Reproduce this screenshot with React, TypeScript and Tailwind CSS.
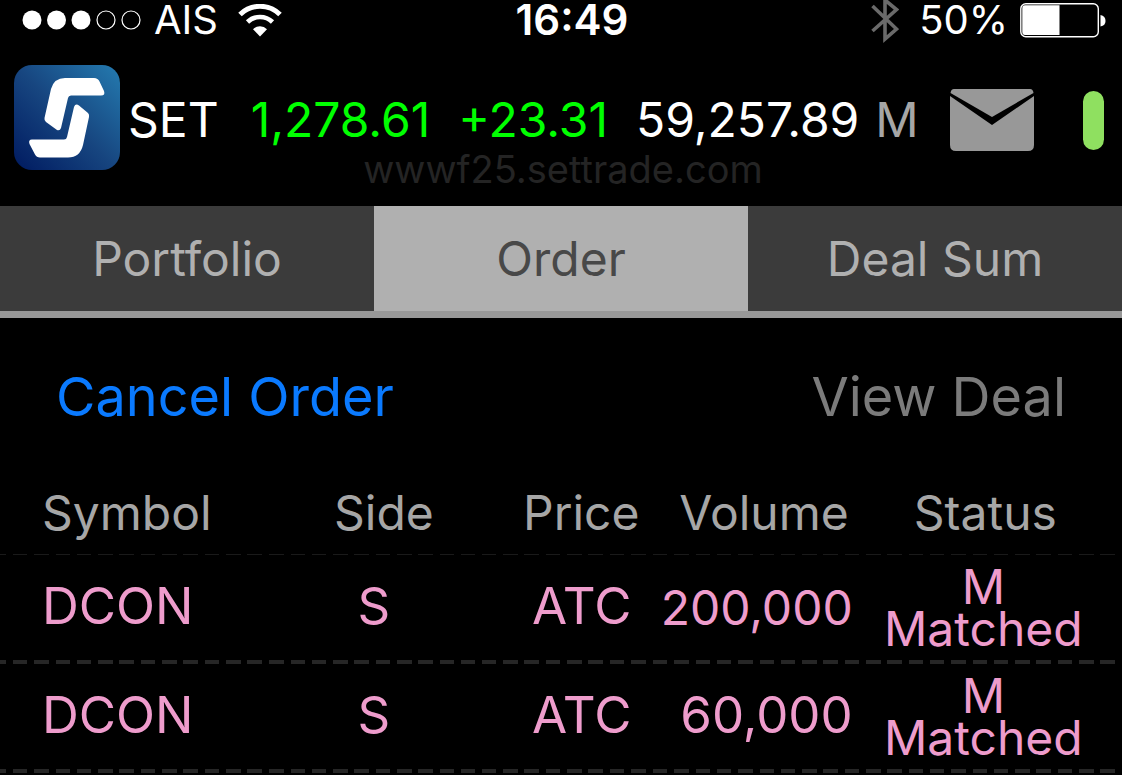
import { clsx } from 'clsx';

interface Order {
  id: number;
  symbol: string;
  side: string;
  price: string;
  volume: string;
  status: string[];
}

const orders: Order[] = [
  { id: 1, symbol: 'DCON', side: 'S', price: 'ATC', volume: '200,000', status: ['M', 'Matched'] },
  { id: 2, symbol: 'DCON', side: 'S', price: 'ATC', volume: '60,000', status: ['M', 'Matched'] },
];

const tabs = ['Portfolio', 'Order', 'Deal Sum'];

function SignalDots() {
  return (
    <svg width="120" height="20" viewBox="0 0 120 20" aria-hidden="true">
      <circle cx="10" cy="10" r="9.5" fill="#fff" />
      <circle cx="34.5" cy="10" r="9.5" fill="#fff" />
      <circle cx="59" cy="10" r="9.5" fill="#fff" />
      <circle cx="84" cy="10" r="9" fill="none" stroke="#fff" strokeWidth="1.2" />
      <circle cx="109" cy="10" r="9" fill="none" stroke="#fff" strokeWidth="1.2" />
    </svg>
  );
}

function Wifi() {
  return (
    <svg width="44" height="33" viewBox="0 0 44 33" fill="none" stroke="#fff" aria-hidden="true">
      <path d="M2 10.5A28.5 28.5 0 0 1 42 10.5" strokeWidth="5" />
      <path d="M9.5 18A18 18 0 0 1 34.5 18" strokeWidth="4.6" />
      <path d="M22 32.5L15 25.2A10 10 0 0 1 29 25.2Z" fill="#fff" stroke="none" />
    </svg>
  );
}

function Bluetooth() {
  return (
    <svg width="28" height="46" viewBox="0 0 28 46" fill="none" stroke="#6a6a6a" strokeWidth="3.6" aria-hidden="true">
      <path d="M1.5 9L25.5 32L14 42V3L25.5 12.5L1.5 34" />
    </svg>
  );
}

function Battery() {
  return (
    <svg width="86" height="35" viewBox="0 0 86 35" aria-hidden="true">
      <rect x="0.8" y="0.8" width="77.5" height="33" rx="5" fill="none" stroke="#fff" strokeWidth="1.4" />
      <path d="M5 2.3H39.5V32H5Q2.3 32 2.3 29V5.5Q2.3 2.3 5 2.3Z" fill="#fff" />
      <path d="M80.5 12Q85.5 13 85.5 18Q85.5 22.5 80.5 23.5Z" fill="#fff" />
    </svg>
  );
}

function Logo() {
  return (
    <svg className="shrink-0" width="106" height="105" viewBox="0 0 106 105" role="img" aria-label="Settrade">
      <defs>
        <linearGradient id="logo-bg" x1="0" y1="1" x2="1" y2="0">
          <stop offset="0" stopColor="#001a60" />
          <stop offset="0.5" stopColor="#174680" />
          <stop offset="1" stopColor="#247bb0" />
        </linearGradient>
      </defs>
      <rect width="106" height="105" rx="18" fill="url(#logo-bg)" />
      <g fill="#fff">
        <path d="M51 13H80Q84 13 85.5 16.5L90 26Q91.5 30.5 87 30.5H57Q54.500 30.5 54 33L47 63Q46 66 43 65L32 57Q30 55.5 30.500 53L37 24Q40 13 51 13Z" />
        <path d="M65 40.5L74 48Q75.5 49.500 75 52L69 80Q66 92.5 54 92.5H26Q22.5 92.5 21 89.500L15.500 79Q14 74.500 18 74.500H50Q52.500 74.500 53 72L60 42Q61.500 38 65 40.500Z" />
      </g>
    </svg>
  );
}

function Envelope() {
  return (
    <svg width="86" height="64" viewBox="0 0 86 64" fill="#989898" aria-hidden="true">
      <path d="M5 1H81Q84 1 84.5 5L43 29L1.5 5Q2 1 5 1Z" />
      <path d="M1 8L43 37L85 8V57Q85 63 79 63H7Q1 63 1 57Z" />
    </svg>
  );
}

export default function App() {
  return (
    <div className="min-h-screen bg-black font-[Inter,sans-serif] text-white">
      <div className="grid h-10 grid-cols-3 grid-rows-1 items-center pr-4 pl-[22px] text-[40px] leading-10">
        <div className="flex items-center gap-3">
          <SignalDots />
          <span>AIS</span>
          <span className="pl-2"><Wifi /></span>
        </div>
        <div className="pl-4 text-center text-[42px] font-semibold">16:49</div>
        <div className="flex items-center justify-end gap-3">
          <Bluetooth />
          <span className="pl-2">50%</span>
          <Battery />
        </div>
      </div>

      <header className="relative flex h-[166px] items-start justify-between pt-[25px] pr-[18px] pl-[14px]">
        <div className="flex items-center text-[48px]">
          <Logo />
          <span className="pt-1 pl-2">SET</span>
          <span className="pt-1 pl-8 text-[#00ff00]">1,278.61</span>
          <span className="pt-1 pl-7 text-[#00ff00]">+23.31</span>
          <span className="pt-1 pl-7">59,257.89</span>
          <span className="pt-1 pl-4 text-[#a6a6a6]">M</span>
        </div>
        <div className="flex h-[110px] items-center gap-12">
          <button type="button" aria-label="Messages"><Envelope /></button>
          <span className="h-[59px] w-[21px] rounded-full bg-[#8fe060]" />
        </div>
        <div className="pointer-events-none absolute inset-x-0 bottom-4 pl-1 text-center text-[38px] leading-[42px] text-[#242424]">
          wwwf25.settrade.com
        </div>
      </header>

      <nav className="grid grid-cols-3 border-b-[7px] border-[#989898]">
        {tabs.map((tab) => (
          <button
            key={tab}
            type="button"
            className={clsx(
              'h-[105px] text-[48px]',
              tab === 'Order' ? 'bg-[#b0b0b0] text-[#484848]' : 'bg-[#3b3b3b] text-[#b0b0b0]'
            )}
          >
            {tab}
          </button>
        ))}
      </nav>

      <div className="flex h-[156px] items-center justify-between pr-14 pl-14 text-[54px]">
        <button type="button" className="text-[#0a7aff]">Cancel Order</button>
        <button type="button" className="text-[#7b7b7b]">View Deal</button>
      </div>

      <table className="w-full table-fixed">
        <thead>
          <tr className="h-[81px] bg-[repeating-linear-gradient(90deg,#1a1a1a_0_0.55%,transparent_0.55%_1.15%,#1a1a1a_1.15%_1.9%)] bg-[length:100%_1px] bg-bottom bg-no-repeat text-[48px] text-[#a6a6a6]">
            <th className="w-1/4 pb-1 pl-[42px] text-left font-normal">Symbol</th>
            <th className="w-[17%] pb-1 pl-4 text-center font-normal">Side</th>
            <th className="w-[15%] pb-1 text-right font-normal">Price</th>
            <th className="w-[19%] pr-1 pb-1 text-right font-normal">Volume</th>
            <th className="w-[24%] pr-1 pb-1 text-center font-normal">Status</th>
          </tr>
        </thead>
        <tbody>
          {orders.map((order) => (
            <tr
              key={order.id}
              className="h-[109px] bg-[repeating-linear-gradient(90deg,#262626_0_0.55%,transparent_0.55%_1.15%,#262626_1.15%_1.9%)] bg-[length:100%_4px] bg-bottom bg-no-repeat text-[51px] leading-[60px] text-[#ee9ccc]"
            >
              <td className="pb-2 pl-[42px]">{order.symbol}</td>
              <td className="pr-1 pb-2 text-center">{order.side}</td>
              <td className="pr-2 pb-2 text-right">{order.price}</td>
              {/* long volumes drop a size so they stay inside the column */}
              <td className={clsx('text-right', order.volume.length > 6 ? 'pb-1 text-[48px]' : 'pb-2')}>
                {order.volume}
              </td>
              <td className="pr-2 pb-1 text-center text-[48px] leading-[42px]">
                {order.status.map((line) => (
                  <div key={line}>{line}</div>
                ))}
              </td>
            </tr>
          ))}
        </tbody>
      </table>
    </div>
  );
}
